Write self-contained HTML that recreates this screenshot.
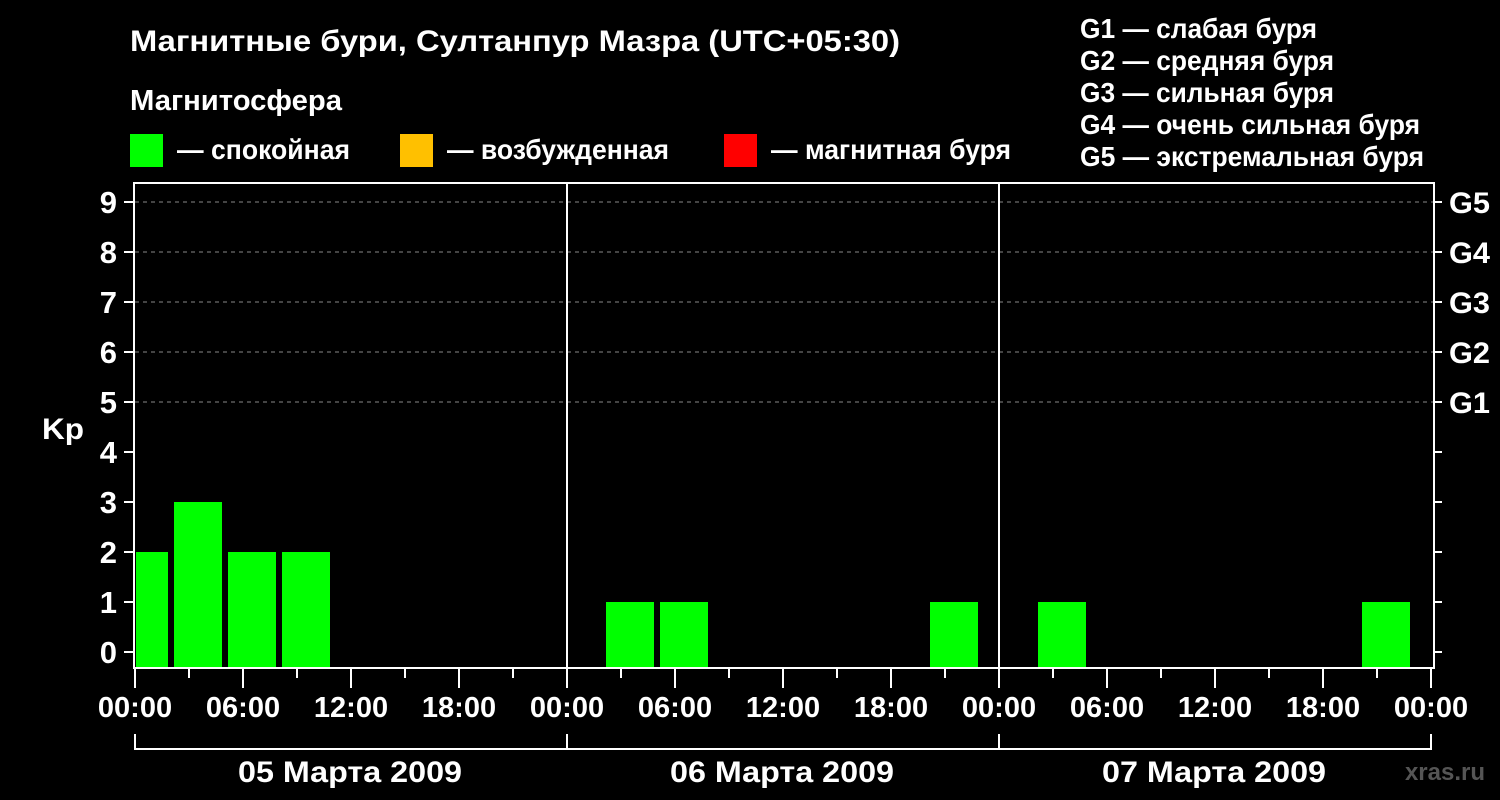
<!DOCTYPE html>
<html><head><meta charset="utf-8"><style>
html,body{margin:0;padding:0;background:#000;width:1500px;height:800px;overflow:hidden}
svg{display:block}
text{font-family:"Liberation Sans",sans-serif;font-weight:bold;fill:#fff}
</style></head><body>
<svg width="1500" height="800" xmlns="http://www.w3.org/2000/svg">
<rect width="1500" height="800" fill="#000"/>
<text x="130" y="51" font-size="30" textLength="770" lengthAdjust="spacingAndGlyphs">Магнитные бури, Султанпур Мазра (UTC+05:30)</text>
<text x="130" y="110" font-size="29" textLength="212" lengthAdjust="spacingAndGlyphs">Магнитосфера</text>
<rect x="130" y="134" width="33" height="33" fill="#00ff00"/>
<text x="177" y="159" font-size="28" textLength="173" lengthAdjust="spacingAndGlyphs">— спокойная</text>
<rect x="400" y="134" width="33" height="33" fill="#ffc000"/>
<text x="447" y="159" font-size="28" textLength="222" lengthAdjust="spacingAndGlyphs">— возбужденная</text>
<rect x="724" y="134" width="33" height="33" fill="#ff0000"/>
<text x="771" y="159" font-size="28" textLength="240" lengthAdjust="spacingAndGlyphs">— магнитная буря</text>
<g font-size="28">
<text x="1080" y="38" textLength="237" lengthAdjust="spacingAndGlyphs">G1 — слабая буря</text>
<text x="1080" y="70" textLength="254" lengthAdjust="spacingAndGlyphs">G2 — средняя буря</text>
<text x="1080" y="102" textLength="254" lengthAdjust="spacingAndGlyphs">G3 — сильная буря</text>
<text x="1080" y="134" textLength="340" lengthAdjust="spacingAndGlyphs">G4 — очень сильная буря</text>
<text x="1080" y="166" textLength="344" lengthAdjust="spacingAndGlyphs">G5 — экстремальная буря</text>
</g>
<g stroke="#888" stroke-width="1" stroke-dasharray="4,4">
<line x1="135" y1="202" x2="1433" y2="202"/>
<line x1="135" y1="252" x2="1433" y2="252"/>
<line x1="135" y1="302" x2="1433" y2="302"/>
<line x1="135" y1="352" x2="1433" y2="352"/>
<line x1="135" y1="402" x2="1433" y2="402"/>
</g>
<g fill="#00ff00">
<rect x="136" y="552" width="32" height="116"/>
<rect x="174" y="502" width="48" height="166"/>
<rect x="228" y="552" width="48" height="116"/>
<rect x="282" y="552" width="48" height="116"/>
<rect x="606" y="602" width="48" height="66"/>
<rect x="660" y="602" width="48" height="66"/>
<rect x="930" y="602" width="48" height="66"/>
<rect x="1038" y="602" width="48" height="66"/>
<rect x="1362" y="602" width="48" height="66"/>
</g>
<g stroke="#fff" stroke-width="2" fill="none">
<rect x="134" y="183" width="1300" height="485"/>
<line x1="567" y1="183" x2="567" y2="668"/>
<line x1="999" y1="183" x2="999" y2="668"/>
<path d="M124 202H134M124 252H134M124 302H134M124 352H134M124 402H134M124 452H134M124 502H134M124 552H134M124 602H134M124 652H134"/>
<path d="M1434 202H1442M1434 252H1442M1434 302H1442M1434 352H1442M1434 402H1442M1434 452H1442M1434 502H1442M1434 552H1442M1434 602H1442M1434 652H1442"/>
<path d="M135 668V688M243 668V688M351 668V688M459 668V688M567 668V688M675 668V688M783 668V688M891 668V688M999 668V688M1107 668V688M1215 668V688M1323 668V688M1431 668V688"/>
<path d="M189 668V678M297 668V678M405 668V678M513 668V678M621 668V678M729 668V678M837 668V678M945 668V678M1053 668V678M1161 668V678M1269 668V678M1377 668V678"/>
<path d="M135 734V749H1431V734M567 734V749M999 734V749"/>
</g>
<g font-size="31" text-anchor="end">
<text x="117" y="213">9</text><text x="117" y="263">8</text><text x="117" y="313">7</text><text x="117" y="363">6</text><text x="117" y="413">5</text><text x="117" y="463">4</text><text x="117" y="513">3</text><text x="117" y="563">2</text><text x="117" y="613">1</text><text x="117" y="663">0</text>
</g>
<text x="42" y="439" font-size="30" textLength="42" lengthAdjust="spacingAndGlyphs">Kp</text>
<g font-size="30">
<text x="1449" y="213" textLength="41" lengthAdjust="spacingAndGlyphs">G5</text><text x="1449" y="263" textLength="41" lengthAdjust="spacingAndGlyphs">G4</text><text x="1449" y="313" textLength="41" lengthAdjust="spacingAndGlyphs">G3</text><text x="1449" y="363" textLength="41" lengthAdjust="spacingAndGlyphs">G2</text><text x="1449" y="413" textLength="41" lengthAdjust="spacingAndGlyphs">G1</text>
</g>
<g font-size="29" text-anchor="middle">
<text x="135" y="717">00:00</text><text x="243" y="717">06:00</text><text x="351" y="717">12:00</text><text x="459" y="717">18:00</text>
<text x="567" y="717">00:00</text><text x="675" y="717">06:00</text><text x="783" y="717">12:00</text><text x="891" y="717">18:00</text>
<text x="999" y="717">00:00</text><text x="1107" y="717">06:00</text><text x="1215" y="717">12:00</text><text x="1323" y="717">18:00</text>
<text x="1431" y="717">00:00</text>
</g>
<g font-size="30">
<text x="238" y="782" textLength="224" lengthAdjust="spacingAndGlyphs">05 Марта 2009</text>
<text x="670" y="782" textLength="224" lengthAdjust="spacingAndGlyphs">06 Марта 2009</text>
<text x="1102" y="782" textLength="224" lengthAdjust="spacingAndGlyphs">07 Марта 2009</text>
</g>
<text x="1485" y="780" font-size="24" text-anchor="end" style="fill:#555">xras.ru</text>
</svg>
</body></html>
